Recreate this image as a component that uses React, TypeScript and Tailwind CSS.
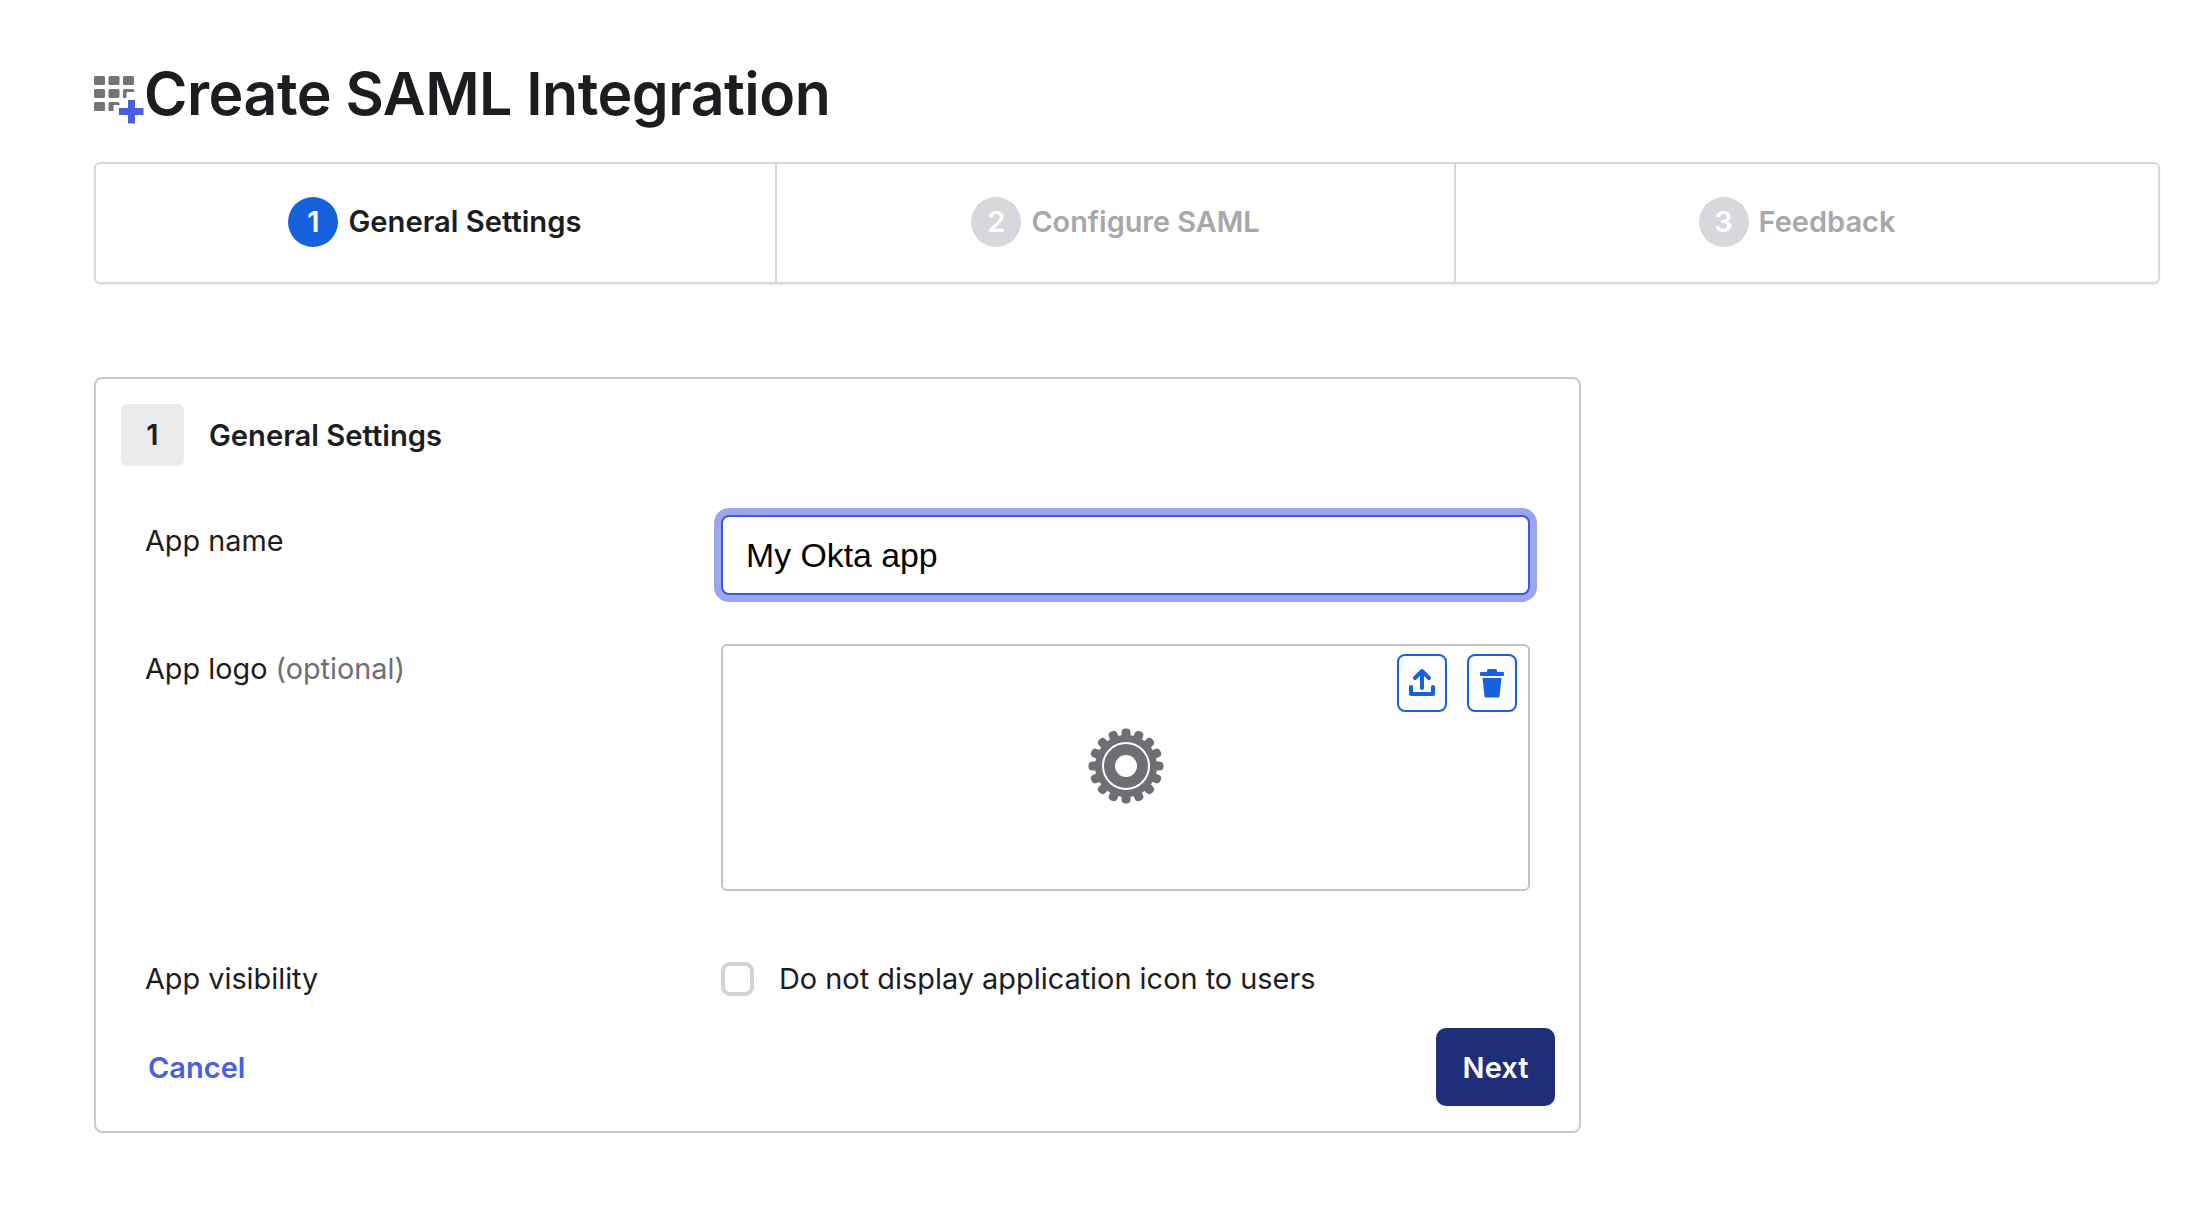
import React from "react";

const inter = "font-['Inter',sans-serif]";

function GridPlus() {
  return (
    <svg width="50" height="48" viewBox="0 0 50 48" className="mt-[16px] shrink-0">
      <g fill="#737378">
        <rect x="0" y="0" width="11" height="9" rx="1.5" />
        <rect x="14.500" y="0" width="11" height="9" rx="1.5" />
        <rect x="29" y="0" width="11" height="9" rx="1.5" />
        <rect x="0" y="13" width="11" height="9" rx="1.5" />
        <rect x="14.500" y="13" width="11" height="9" rx="1.5" />
        <path d="M29 22v-7.500a1.500 1.500 0 0 1 1.500-1.500h8a1.500 1.500 0 0 1 1.500 1.500V16h-6.500a1 1 0 0 0-1 1v5z" />
        <rect x="0" y="26" width="11" height="9" rx="1.5" />
        <path d="M14.500 35v-7.500a1.500 1.500 0 0 1 1.500-1.500h8a1.500 1.500 0 0 1 1.500 1.500V29h-5a1 1 0 0 0-1 1v5z" />
      </g>
      <path d="M34 24h7v8h8.500v7H41v8.500h-7V39h-9v-7h9z" fill="#4a5fe0" />
    </svg>
  );
}

function Step({ n, label, active, className, textSize }: { n: number; label: string; active?: boolean; className: string; textSize: string }) {
  return (
    <div className={`flex items-center justify-center pb-[2px] ${className}`}>
      <span
        className={`flex h-[50px] w-[50px] items-center justify-center rounded-full text-[29px] font-semibold text-white ${
          active ? "bg-[#1662dd]" : "bg-[#d7d7dc]"
        }`}
      >
        {n}
      </span>
      <span className={`ml-[10px] font-semibold ${textSize} ${active ? "text-[#1d1d21]" : "text-[#a7a7ae]"}`}>{label}</span>
    </div>
  );
}

function Gear() {
  const teeth = Array.from({ length: 16 }, (_, i) => (i * 360) / 16);
  return (
    <svg width="76" height="76" viewBox="0 0 76 76" className="mb-[3px]">
      {teeth.map((a) => (
        <rect key={a} x="33.500" y="0.500" width="9" height="12" rx="4" fill="#6e6e73" transform={`rotate(${a} 38 38)`} />
      ))}
      <circle cx="38" cy="38" r="31" fill="#6e6e73" />
      <circle cx="38" cy="38" r="23" fill="none" stroke="#fff" strokeWidth="2" />
      <circle cx="38" cy="38" r="11" fill="#fff" />
    </svg>
  );
}

function IconBtn({ children }: { children: React.ReactNode }) {
  return (
    <button className="flex h-[58px] w-[50px] items-center justify-center rounded-[8px] border-2 border-[#1662dd] bg-white">
      {children}
    </button>
  );
}

export default function App() {
  return (
    <div className={`min-h-[1229px] bg-white pl-[94px] pr-[40px] pt-[60px] text-[#1d1d21] ${inter}`}>
      <div className="flex h-[68px] items-start">
        <GridPlus />
        <h1 className="text-[59px] font-semibold leading-[68px] tracking-[-0.5px] text-[#1d1d21]">Create SAML Integration</h1>
      </div>

      <div className="mt-[34px] flex h-[122px] rounded-[6px] border-2 border-[#d7d7dc] shadow-[0_1px_2px_rgba(0,0,0,0.08)]">
        <Step n={1} label="General Settings" active textSize="text-[29.200px]" className="w-[681px] border-r-2 border-[#d7d7dc] pr-[1px]" />
        <Step n={2} label="Configure SAML" textSize="text-[28.800px]" className="w-[679px] border-r-2 border-[#d7d7dc]" />
        <Step n={3} label="Feedback" textSize="text-[29px]" className="flex-1 pr-[20px]" />
      </div>

      <div className="mt-[93px] flex h-[756px] w-[1487px] flex-col rounded-[8px] border-2 border-[#c9c9ce] pl-[25px] pr-[24px] pt-[25px]">
        <div className="flex items-center">
          <span className="flex h-[62px] w-[63px] items-center justify-center rounded-[6px] bg-[#ebebed] text-[29px] font-semibold">1</span>
          <span className="ml-[25px] pt-[2px] text-[29.200px] font-semibold">General Settings</span>
        </div>

        <div className="mt-[49px] flex pl-[24px]">
          <div className="w-[576px] pt-[6px] text-[28.800px] leading-[40px]">App name</div>
          <div className="flex h-[80px] w-[809px] items-center rounded-[8px] border-2 border-[#3f57e0] bg-white pl-[23px] text-[33.800px] font-['Liberation_Sans',sans-serif] text-black shadow-[0_0_0_7px_#9ba6ef]">
            My Okta app
          </div>
        </div>

        <div className="mt-[49px] flex pl-[24px]">
          <div className="w-[576px] pt-[5px] text-[28.800px] leading-[40px]">
            App logo <span className="text-[#6e6e73]">(optional)</span>
          </div>
          <div className="relative flex h-[247px] w-[809px] items-center justify-center rounded-[6px] border-2 border-[#c1c1c8]">
            <Gear />
            <div className="absolute right-[11px] top-[8px] flex gap-[20px]">
              <IconBtn>
                <svg width="28" height="30" viewBox="0 0 28 30" fill="none" stroke="#1662dd" strokeWidth="4" strokeLinecap="round" strokeLinejoin="round">
                  <path d="M14 20V4M7 10l7-7 7 7" />
                  <path d="M3 19v7h22v-7" />
                </svg>
              </IconBtn>
              <IconBtn>
                <svg width="26" height="30" viewBox="0 0 26 30" fill="#1662dd">
                  <rect x="1" y="4" width="24" height="4" rx="1" />
                  <rect x="8" y="1" width="10" height="4" rx="1.500" />
                  <path d="M3.500 10h19l-2 18.500a1.500 1.500 0 0 1-1.500 1H7a1.500 1.500 0 0 1-1.500-1z" />
                </svg>
              </IconBtn>
            </div>
          </div>
        </div>

        <div className="mt-[68px] flex items-center pl-[24px]">
          <div className="w-[576px] text-[28.800px] leading-[40px]">App visibility</div>
          <span className="h-[34px] w-[33px] rounded-[9px] border-[4px] border-[#d2d2d6] bg-white" />
          <span className="ml-[25px] text-[28.900px] leading-[40px]">Do not display application icon to users</span>
        </div>

        <div className="mt-[29px] flex items-center justify-between pl-[27px]">
          <a className="pt-[2px] text-[29px] font-semibold text-[#4a5fe0]">Cancel</a>
          <button className="flex h-[78px] w-[119px] items-center justify-center rounded-[10px] bg-[#1f2e78] pt-[2px] text-[29px] font-semibold text-white">Next</button>
        </div>
      </div>
    </div>
  );
}
